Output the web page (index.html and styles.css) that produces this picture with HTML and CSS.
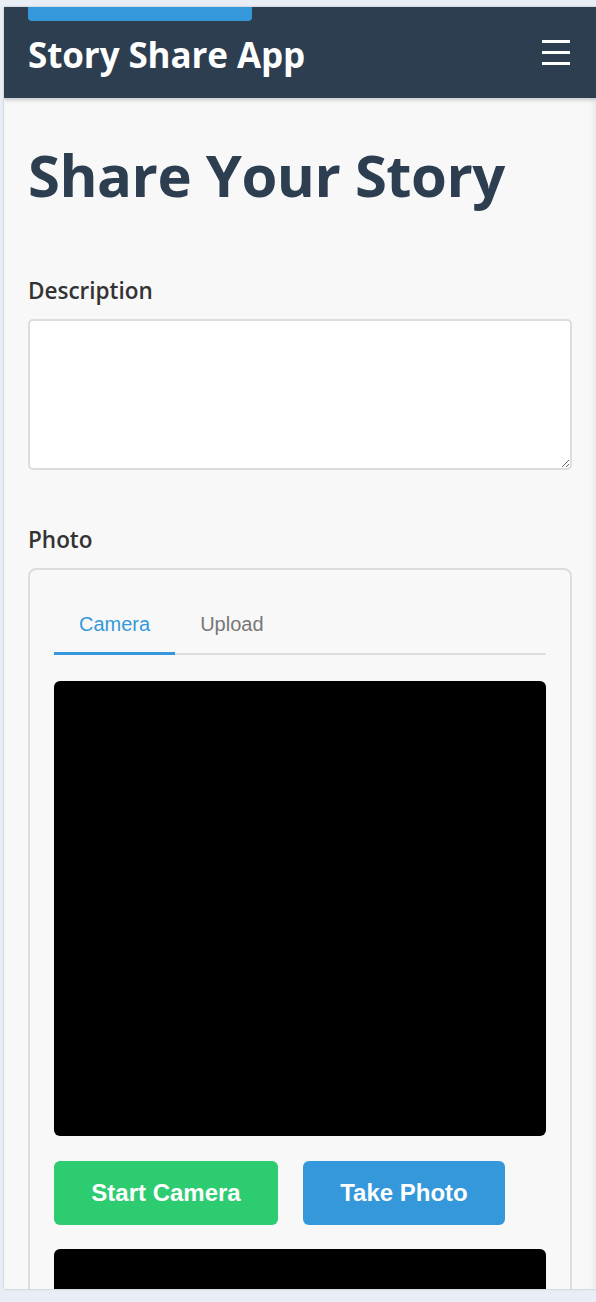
FILE: index.html
```html
<!DOCTYPE html>
<html lang="en">
<head>
<meta charset="utf-8">
<title>Story Share App</title>
<link rel="stylesheet" href="styles.css">
</head>
<body>
<div class="frame">
  <a class="skip-link" href="#main">Skip to content</a>
  <header class="app-header">
    <h1 class="app-title">Story Share App</h1>
    <button class="menu-btn" aria-label="Menu">
      <span class="bar"></span><span class="bar"></span><span class="bar"></span>
    </button>
  </header>
  <main class="content" id="main">
    <h2 class="page-title">Share Your Story</h2>
    <div class="field">
      <label class="field-label" for="desc">Description</label>
      <textarea id="desc" class="textarea"></textarea>
    </div>
    <div class="field">
      <label class="field-label">Photo</label>
      <div class="photo-box">
        <div class="tabs">
          <button class="tab tab-active">Camera</button>
          <button class="tab">Upload</button>
        </div>
        <div class="video"></div>
        <div class="actions">
          <button class="btn btn-green">Start Camera</button>
          <button class="btn btn-blue">Take Photo</button>
        </div>
        <div class="preview"></div>
      </div>
    </div>
  </main>
</div>
</body>
</html>
```

FILE: styles.css
```css
* { box-sizing: border-box; }
html, body { margin: 0; padding: 0; }
body {
  background: #e9edf5;
  height: 1302px;
  overflow: hidden;
  font-family: "Open Sans", "Noto Sans", sans-serif;
}
.frame {
  position: relative;
  margin: 7px 0 0 4px;
  height: 1282px;
  overflow: hidden;
  background: #f8f8f8;
  box-shadow: 0 0 2px rgba(0,0,0,0.25), inset -6px 0 6px -4px rgba(0,0,0,0.08);
}
.skip-link {
  position: absolute;
  left: 24px;
  top: 0;
  width: 224px;
  height: 14px;
  background: #3498db;
  border-radius: 0 0 4px 4px;
  color: transparent;
  font-size: 1px;
  overflow: hidden;
  z-index: 2;
}
.app-header {
  height: 91px;
  background: #2c3e50;
  display: flex;
  align-items: center;
  justify-content: space-between;
  padding: 4px 24px 0 24px;
  box-shadow: 0 2px 4px rgba(0,0,0,0.2);
  position: relative;
  z-index: 1;
}
.app-title {
  margin: 0;
  color: #fff;
  font-size: 35px;
  line-height: 1.2;
  font-weight: 700;
  letter-spacing: -0.1px;
}
.menu-btn {
  background: none;
  border: 0;
  padding: 0;
  width: 28px;
  display: flex;
  flex-direction: column;
  gap: 8px;
  margin-right: 2px;
  margin-top: -4px;
}
.bar {
  display: block;
  height: 3px;
  background: #fff;
}
.content {
  padding: 42px 20px 0 24px;
}
.page-title {
  margin: 0 0 66px;
  color: #2c3e50;
  font-size: 58px;
  line-height: 70px;
  font-weight: 700;
  letter-spacing: -0.5px;
}
.field { margin-bottom: 55px; }
.field-label {
  display: block;
  color: #333;
  font-size: 22.5px;
  line-height: 30px;
  font-weight: 600;
  margin-bottom: 13px;
}
.textarea {
  display: block;
  width: 544px;
  height: 151px;
  border: 2px solid #ddd;
  border-radius: 5px;
  background: #fff;
  resize: vertical;
}
.photo-box {
  width: 544px;
  border: 2px solid #ddd;
  border-radius: 8px;
  padding: 24px 24px 24px;
}
.tabs {
  display: flex;
  border-bottom: 2px solid #ddd;
  margin-bottom: 26px;
}
.tab {
  background: none;
  border: 0;
  font-family: "Liberation Sans", Arial, sans-serif;
  font-size: 20px;
  line-height: 24px;
  color: #777;
  padding: 18px 25px 16px;
  margin-bottom: -2px;
  border-bottom: 3px solid transparent;
}
.tab-active {
  color: #3498db;
  border-bottom-color: #3498db;
}
.video {
  height: 455px;
  background: #000;
  border-radius: 6px;
}
.actions {
  display: flex;
  gap: 25px;
  margin: 25px 0 24px;
}
.btn {
  border: 0;
  border-radius: 6px;
  height: 64px;
  color: #fff;
  font-family: "Liberation Sans", Arial, sans-serif;
  font-size: 24px;
  font-weight: 700;
}
.btn-green { background: #2ecc71; width: 224px; }
.btn-blue { background: #3498db; width: 202px; }
.preview {
  height: 300px;
  background: #000;
  border-radius: 6px;
}
```
